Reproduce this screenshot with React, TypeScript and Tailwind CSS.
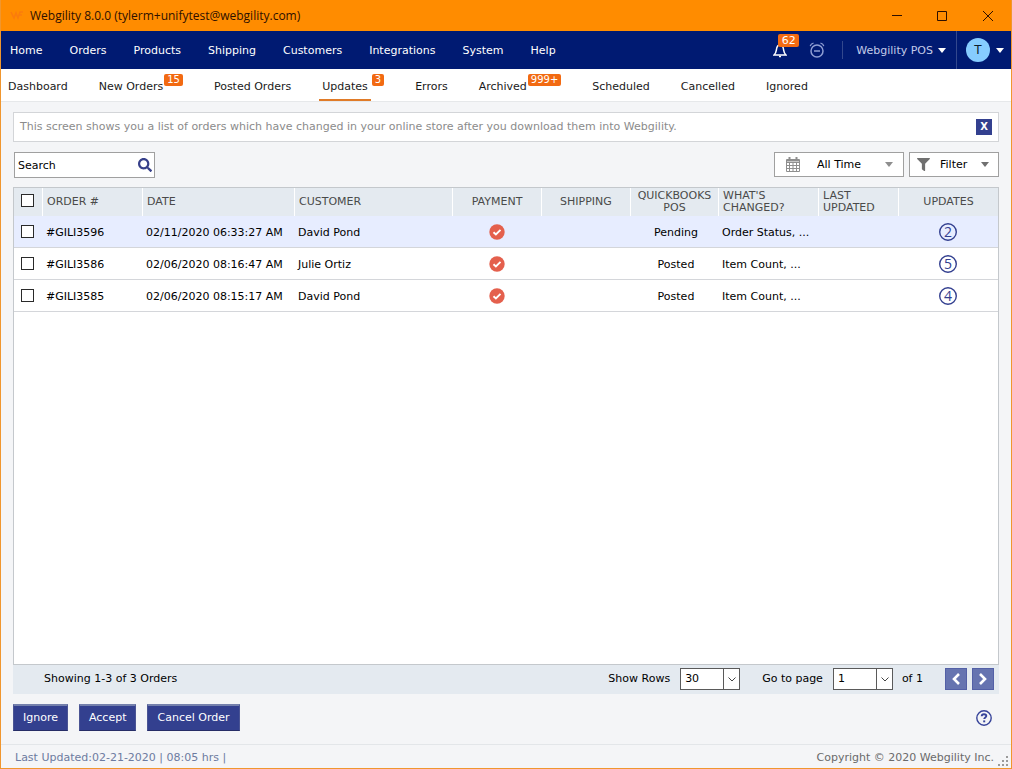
import { FaSearch, FaFilter } from "react-icons/fa"

const menu = ["Home", "Orders", "Products", "Shipping", "Customers", "Integrations", "System", "Help"]

const tabs = [
  { label: "Dashboard" },
  { label: "New Orders", badge: "15" },
  { label: "Posted Orders" },
  { label: "Updates", badge: "3", active: true },
  { label: "Errors" },
  { label: "Archived", badge: "999+" },
  { label: "Scheduled" },
  { label: "Cancelled" },
  { label: "Ignored" },
]

const orders = [
  { id: "#GILI3596", date: "02/11/2020 06:33:27 AM", customer: "David Pond", status: "Pending", changed: "Order Status, ...", updates: 2 },
  { id: "#GILI3586", date: "02/06/2020 08:16:47 AM", customer: "Julie Ortiz", status: "Posted", changed: "Item Count, ...", updates: 5 },
  { id: "#GILI3585", date: "02/06/2020 08:15:17 AM", customer: "David Pond", status: "Posted", changed: "Item Count, ...", updates: 4 },
]

function Caret({ className }: { className?: string }) {
  return (
    <svg viewBox="0 0 8 5" className={`h-[5px] w-2 shrink-0 ${className ?? ""}`} fill="currentColor">
      <path d="M0 0h8L4 5z" />
    </svg>
  )
}

function TitleBar() {
  return (
    <div className="flex h-[31px] items-center bg-[#ff8c00] pl-[9px] font-['Open_Sans',sans-serif] text-[12px] text-[#2e1000]">
      <svg viewBox="0 0 14 12" className="mr-[6px] h-3 w-[14px]" fill="none" stroke="#fb7c0c" strokeWidth="1.6">
        <path d="M1 2l3 6 2-5 2 5 2-6h3M9 5h3" />
      </svg>
      <span>Webgility 8.0.0 (tylerm+unifytest@webgility.com)</span>
      <div className="ml-auto flex">
        <button aria-label="Minimize" className="flex h-[31px] w-[45px] items-center justify-center">
          <svg viewBox="0 0 10 10" className="size-[10px]" stroke="#2e1000"><path d="M0 4.5h10" /></svg>
        </button>
        <button aria-label="Maximize" className="flex h-[31px] w-[45px] items-center justify-center">
          <svg viewBox="0 0 10 10" className="size-[10px]" fill="none" stroke="#2e1000"><path d="M.5.5h9v9h-9z" /></svg>
        </button>
        <button aria-label="Close" className="flex h-[31px] w-[47px] items-center justify-center">
          <svg viewBox="0 0 10 10" className="size-[10px]" stroke="#2e1000"><path d="M0 0l10 10M10 0L0 10" /></svg>
        </button>
      </div>
    </div>
  )
}

function MainMenu() {
  return (
    <div className="flex h-[38px] items-center bg-[#001a72] pl-[9px] text-white">
      <nav className="flex gap-[27px] pt-[2px]">
        {menu.map((item) => (
          <a key={item} href="#">{item}</a>
        ))}
      </nav>
      <div className="ml-auto flex h-full items-center">
        <button aria-label="Notifications" className="relative mr-[22px]">
          <svg viewBox="0 0 14 16" className="h-4 w-[14px]" fill="none" stroke="#fff" strokeWidth="1.5">
            <path d="M1 13c1.6-1.4 2-2.600 2.300-4.600C3.700 5 4.800 2.800 7 2.800s3.300 2.200 3.700 5.600c.3 2 .7 3.200 2.300 4.600z" />
            <path d="M7 1v2M6 14.500h2" />
          </svg>
          <span className="absolute -top-2 left-[5px] flex h-[13px] w-[21px] items-center justify-center rounded-[2px] bg-[#f26a12] leading-[13px]">
            62
          </span>
        </button>
        <button aria-label="Alarms" className="mr-[17px]">
          <svg viewBox="0 0 16 16" className="size-4" fill="none" stroke="#8f9fd4" strokeWidth="1.500">
            <circle cx="8" cy="9" r="6" />
            <path d="M5 9h6" />
            <path d="M1.200 4.200C1.600 2.600 2.800 1.400 4.500 1.100M14.800 4.200c-.4-1.600-1.600-2.800-3.300-3.100" strokeWidth="1.300" />
          </svg>
        </button>
        <button className="flex h-[18px] items-center gap-[5px] border-l border-[#33488d] pr-[10px] pl-[13px] text-[#c3cbe8]">
          <span className="pt-[2px]">Webgility POS</span>
          <Caret className="text-white" />
        </button>
        <button aria-label="Account" className="flex h-full items-center gap-[6px] border-l border-[#33488d] pr-[7px] pl-[9px]">
          <span className="flex size-6 items-center justify-center rounded-full bg-[#86ccff] text-[12px] text-[#0b1c2c]">T</span>
          <Caret className="text-white" />
        </button>
      </div>
    </div>
  )
}

function Tabs() {
  return (
    <nav className="flex h-[33px] gap-[31px] border-b border-[#e6e8ea] bg-white pl-[7px] text-[#1a1a1a]">
      {tabs.map((tab) => (
        <a key={tab.label} href="#" className="flex">
          <span className={tab.active ? "-ml-[3px] border-b-2 border-[#e07b28] px-[3px] pt-[10px]" : "pt-[10px]"}>{tab.label}</span>
          {tab.badge && (
            <span className="mt-[5px] ml-px h-3 rounded-[2px] bg-[#f26a12] px-[3px] text-[10px] leading-3 text-white">{tab.badge}</span>
          )}
        </a>
      ))}
    </nav>
  )
}

function Toolbar() {
  return (
    <div className="mt-[10px] flex h-[26px] items-start">
      <div className="ml-px flex h-[26px] w-[141px] items-center border border-[#a0a0a0] bg-white pr-[2px] pl-[3px]">
        <input type="text" aria-label="Search" placeholder="Search" className="min-w-0 flex-1 pt-[2px] outline-none placeholder:text-black" />
        <button aria-label="Run search">
          <FaSearch className="size-[14px] text-[#37408a]" />
        </button>
      </div>
      <div className="relative mr-[5px] ml-auto h-[25px] w-[130px] text-[#8e8e8e]">
        <select aria-label="Time range" className="size-full appearance-none border border-[#a0a0a0] bg-white pl-[42px] text-black">
          <option>All Time</option>
        </select>
        <svg viewBox="0 0 14 15" className="pointer-events-none absolute top-[5px] left-3 h-[15px] w-[14px]" fill="none" stroke="currentColor">
          <path d="M.5 2.500h13v12H.5zM.5 5.500h13M.5 8.500h13M.5 11.500h13M3.500 5v9.500M7 5v9.500M10.500 5v9.500" />
          <path d="M1 3.500h12" strokeWidth="2" />
          <path d="M3.500 0v3M10.500 0v3" strokeWidth="2" />
        </svg>
        <Caret className="pointer-events-none absolute top-[10px] right-[11px]" />
      </div>
      <button className="flex h-[25px] w-[90px] items-center border border-[#a0a0a0] bg-white px-[7px]">
        <FaFilter className="mr-[10px] size-[13px] text-[#707070]" />
        Filter
        <Caret className="mr-[2px] ml-auto text-[#707070]" />
      </button>
    </div>
  )
}

function CheckBox({ label }: { label: string }) {
  return (
    <input
      type="checkbox"
      aria-label={label}
      className="ml-[7px] block size-[13px] appearance-none border border-[#2a2a2a] bg-white checked:bg-[#344090]"
    />
  )
}

function OrdersTable() {
  const th = "h-[28px] border-l border-white px-1 font-normal"
  const td = "border-b border-[#d4d6da]"
  const text = `${td} pt-[3px] pl-1`
  return (
    <div className="mt-[9px] flex-1 border border-[#c4c8cc] bg-white">
      <table className="w-full table-fixed border-separate border-spacing-0 text-left">
        <colgroup>
          <col className="w-[28px]" />
          <col className="w-[100px]" />
          <col className="w-[152px]" />
          <col />
          <col className="w-[89px]" />
          <col className="w-[89px]" />
          <col className="w-[88px]" />
          <col className="w-[100px]" />
          <col className="w-[80px]" />
          <col className="w-[100px]" />
        </colgroup>
        <thead className="bg-[#e4eaf0] leading-3 text-[#4a4a4a]">
          <tr>
            <th className="h-[28px] pb-[3px]"><CheckBox label="Select all orders" /></th>
            <th className={th}>ORDER #</th>
            <th className={th}>DATE</th>
            <th className={th}>CUSTOMER</th>
            <th className={`${th} text-center`}>PAYMENT</th>
            <th className={`${th} text-center`}>SHIPPING</th>
            <th className={`${th} text-center`}>QUICKBOOKS POS</th>
            <th className={th}>WHAT'S<br />CHANGED?</th>
            <th className={th}>LAST<br />UPDATED</th>
            <th className={`${th} text-center`}>UPDATES</th>
          </tr>
        </thead>
        <tbody className="whitespace-nowrap text-black">
          {orders.map((order, i) => (
            <tr key={order.id} className={`h-[32px] ${i === 0 ? "bg-[#e7edff]" : "bg-white"}`}>
              <td className={td}><CheckBox label={`Select order ${order.id}`} /></td>
              <td className={text}>{order.id}</td>
              <td className={text}>{order.date}</td>
              <td className={text}>{order.customer}</td>
              <td className={td}>
                <svg viewBox="0 0 16 16" className="mx-auto size-4" aria-label="Paid">
                  <circle cx="8" cy="8" r="7.700" fill="#e4604d" />
                  <path d="M4.500 8.200l2.400 2.300 4.600-4.600" fill="none" stroke="#fff" strokeWidth="1.900" />
                </svg>
              </td>
              <td className={td}></td>
              <td className={`${text} text-center`}>{order.status}</td>
              <td className={text}>{order.changed}</td>
              <td className={td}></td>
              <td className={td}>
                <a href="#" className="relative mx-auto flex size-[18px] items-center justify-center font-['Open_Sans',sans-serif] text-[14px] leading-none font-medium text-[#344090]">
                  <svg viewBox="0 0 18 18" className="absolute inset-0" fill="none" stroke="currentColor" strokeWidth="1.400">
                    <circle cx="9" cy="9" r="8.300" />
                  </svg>
                  {order.updates}
                </a>
              </td>
            </tr>
          ))}
        </tbody>
      </table>
    </div>
  )
}

function PagerSelect({ id, value }: { id: string; value: string }) {
  return (
    <div className="relative h-[22px] w-[60px]">
      <select id={id} className="size-full appearance-none border border-[#5a5a5a] bg-white pl-1">
        <option>{value}</option>
      </select>
      <span className="pointer-events-none absolute inset-y-0 right-0 flex w-[17px] items-center justify-center border-l border-[#5a5a5a]">
        <svg viewBox="0 0 8 5" className="h-[5px] w-2" fill="none" stroke="#444"><path d="M.5.5L4 4 7.500.5" /></svg>
      </span>
    </div>
  )
}

function Pager() {
  const arrow = "flex size-[22px] items-center justify-center border border-[#5360a6] bg-[#6674b0]"
  return (
    <div className="flex h-[29px] items-center bg-[#e4eaf0] pr-[5px] pb-px pl-[31px] text-black">
      <span>Showing 1-3 of 3 Orders</span>
      <label htmlFor="rows" className="mr-[10px] ml-auto">Show Rows</label>
      <PagerSelect id="rows" value="30" />
      <label htmlFor="page" className="mr-[10px] ml-[22px]">Go to page</label>
      <PagerSelect id="page" value="1" />
      <span className="mr-[22px] ml-[9px]">of 1</span>
      <button aria-label="Previous page" className={`${arrow} mr-[5px]`}>
        <svg viewBox="0 0 10 14" className="h-[14px] w-[10px]" fill="none" stroke="#fff" strokeWidth="2.600"><path d="M8 2L3 7l5 5" /></svg>
      </button>
      <button aria-label="Next page" className={arrow}>
        <svg viewBox="0 0 10 14" className="h-[14px] w-[10px]" fill="none" stroke="#fff" strokeWidth="2.600"><path d="M2 2l5 5-5 5" /></svg>
      </button>
    </div>
  )
}

function Actions() {
  const button = "h-[27px] border border-t-2 border-[#4a5494] border-t-[#7480ac] border-b-[#262d66] bg-[#33408f] px-[9px] text-white"
  return (
    <div className="mt-[10px] flex items-center gap-[11px]">
      <button className={button}>Ignore</button>
      <button className={button}>Accept</button>
      <button className={button}>Cancel Order</button>
      <button aria-label="Help" className="mr-[7px] ml-auto">
        <svg viewBox="0 0 16 16" className="size-4" fill="none" stroke="#37449a">
          <circle cx="8" cy="8" r="7.200" strokeWidth="1.400" />
          <path d="M5.700 6.300c0-1.400 1-2.100 2.300-2.100s2.300.7 2.300 1.900c0 1.400-2.100 1.400-2.100 3" strokeWidth="1.900" />
          <path d="M8.200 10.400v1.900" strokeWidth="2" />
        </svg>
      </button>
    </div>
  )
}

export default function App() {
  return (
    <div className="flex min-h-screen flex-col border border-t-0 border-[#f0962e] bg-[#f4f5f7] font-['DejaVu_Sans',Verdana,sans-serif] text-[11px] leading-4">
      <TitleBar />
      <MainMenu />
      <Tabs />
      <main className="flex flex-1 flex-col px-3 pt-[10px] pb-[13px]">
        <div className="flex h-[30px] items-center justify-between border border-[#d3d5d8] bg-white pr-[6px] pl-[6px] text-[#8b8b8b]">
          <p>This screen shows you a list of orders which have changed in your online store after you download them into Webgility.</p>
          <button aria-label="Dismiss" className="size-4 bg-[#33408f] text-[10px] leading-4 font-bold text-white">X</button>
        </div>
        <Toolbar />
        <OrdersTable />
        <Pager />
        <Actions />
      </main>
      <footer className="flex h-6 items-center justify-between border-t border-[#e3e6e9] pt-[2px] pr-[3px] pl-[14px]">
        <span className="text-[#6d7ba0]">Last Updated:02-21-2020 | 08:05 hrs |</span>
        <span className="flex items-end gap-1 text-[#6a6a6a]">
          Copyright © 2020 Webgility Inc.
          <svg viewBox="0 0 10 10" className="size-[10px]" fill="#9a9a9a">
            <path d="M8 0h2v2H8zM4 4h2v2H4zM8 4h2v2H8zM0 8h2v2H0zM4 8h2v2H4zM8 8h2v2H8z" />
          </svg>
        </span>
      </footer>
    </div>
  )
}
